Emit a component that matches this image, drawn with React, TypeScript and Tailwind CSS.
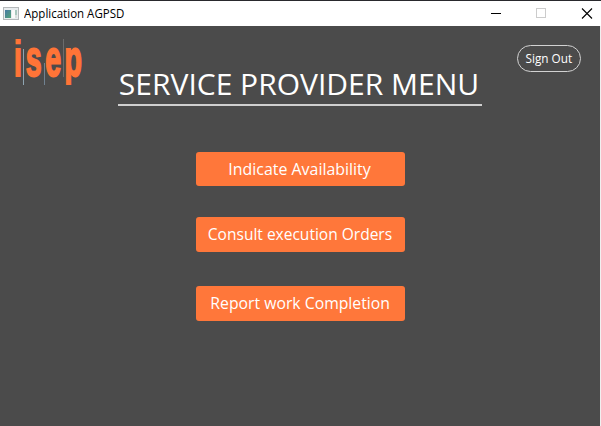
import React from "react";

function Logo() {
  return (
    <svg width="84" height="64" viewBox="0 26 84 64" role="img" aria-label="isep" className="block shrink-0 overflow-visible">
      <defs>
        <clipPath id="logo-clip">
          <rect x="0" y="39" width="84" height="46" />
        </clipPath>
      </defs>
      <g clipPath="url(#logo-clip)">
        <text
          transform="scale(0.56 1)"
          x="25 46 81 115"
          y="76.2"
          fill="#ff7437"
          stroke="#ff7437"
          strokeWidth="2"
          fontFamily="'Liberation Sans', sans-serif"
          fontWeight="700"
          fontSize="51"
        >
          isep
        </text>
      </g>
      <g shapeRendering="crispEdges">
        <rect x="23" y="49" width="1" height="36" fill="#8fa5b2" />
        <rect x="44" y="63" width="1" height="22" fill="#718291" />
        <rect x="63" y="39" width="1" height="38" fill="#6c6c6c" />
      </g>
    </svg>
  );
}

function AppIcon() {
  return (
    <svg width="16" height="14" viewBox="0 0 16 14" shapeRendering="crispEdges" className="block">
      <defs>
        <linearGradient id="pane" x1="0" y1="0" x2="1" y2="1">
          <stop offset="0" stopColor="#4779a5" />
          <stop offset="1" stopColor="#54a477" />
        </linearGradient>
      </defs>
      <rect width="16" height="13" fill="#b4b8ba" />
      <rect x="1" y="1" width="14" height="11" fill="#e8ecee" />
      <rect x="2" y="3" width="6" height="8" fill="url(#pane)" />
      <rect x="9" y="3" width="3" height="8" fill="#fafafa" />
      <rect x="12" y="3" width="2" height="5" fill="#a9c7be" />
      <rect x="12" y="8" width="2" height="3" fill="#d9dfdd" />
    </svg>
  );
}

function TitleBar() {
  return (
    <header className="flex h-[26px] items-center border-t border-[#29292d] bg-white pl-[3px] pr-[8px]">
      <AppIcon />
      <span className="ml-[5px] h-[18px] w-[104px] whitespace-nowrap text-[12px] leading-[18px] text-black">
        <span className="inline-block origin-left scale-x-[0.96]">Application AGPSD</span>
      </span>
      <svg width="102" height="12" viewBox="0 0 102 12" className="ml-auto block">
        <path d="M0 5.5h10" stroke="#000" shapeRendering="crispEdges" />
        <rect x="45.5" y="0.5" width="9" height="9" fill="none" stroke="#ccc" shapeRendering="crispEdges" />
        <path d="M91 0.5l10 10M101 0.5l-10 10" stroke="#000" strokeWidth="1.1" />
      </svg>
    </header>
  );
}

function MenuButton({ className, label, textClass }: { className: string; label: string; textClass: string }) {
  return (
    <button className={`flex w-[209px] items-center justify-center rounded-[3px] bg-[#ff773a] text-white ${className}`}>
      <span className={`whitespace-nowrap text-[16px] leading-[24px] ${textClass}`}>{label}</span>
    </button>
  );
}

export default function App() {
  return (
    <div className="h-[426px] w-[601px] overflow-hidden bg-[#f0f0f0] font-['Open_Sans','Noto_Sans',sans-serif]">
      <TitleBar />
      <main className="h-[400px] w-[600px] bg-[#4b4b4b]">
        <div className="flex h-[80px] items-start">
          <Logo />
          <div className="ml-[34px] mt-[38px] flex h-[42px] w-[364px] justify-center border-b-2 border-[#d0d0d0] pr-[2px]">
            <h1 className="whitespace-nowrap text-[30px] leading-[40px] text-white">
              SERVICE PROVIDER MENU
            </h1>
          </div>
          <button className="ml-[35px] mt-[19px] flex h-[27px] w-[64px] items-center justify-center rounded-full border border-[#d2d2d2] text-[12px] text-white">
            <span className="whitespace-nowrap pt-px scale-x-[0.98]">Sign Out</span>
          </button>
        </div>
        <nav className="flex flex-col items-center pt-[46px]">
          <MenuButton className="h-[34px]" label="Indicate Availability" textClass="scale-x-[0.995]" />
          <MenuButton className="mt-[31px] h-[35px] pb-px" label="Consult execution Orders" textClass="scale-x-[0.97]" />
          <MenuButton className="mt-[34px] h-[35px] pb-px" label="Report work Completion" textClass="scale-x-[0.985]" />
        </nav>
      </main>
    </div>
  );
}
